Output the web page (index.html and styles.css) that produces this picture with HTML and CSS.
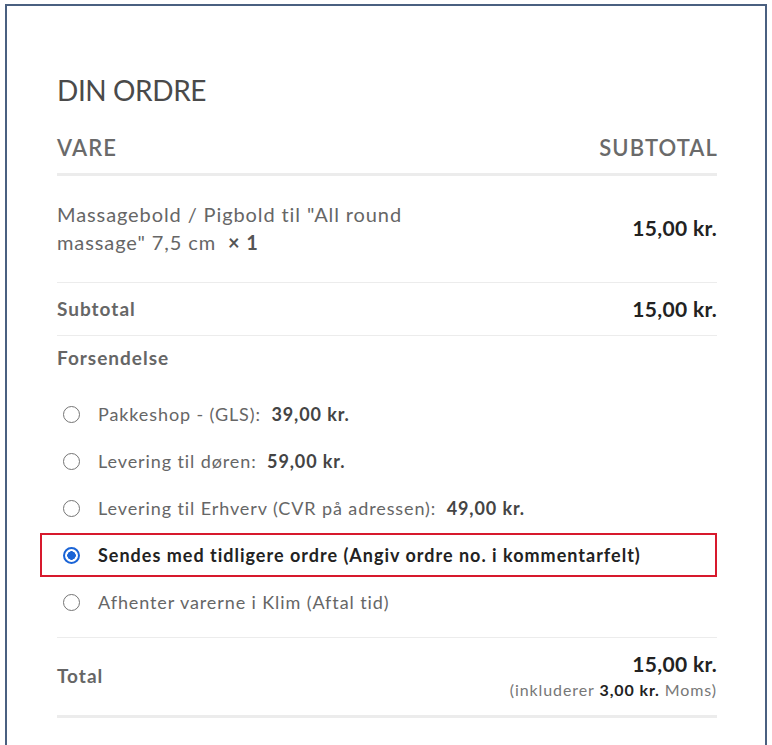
FILE: index.html
```html
<!DOCTYPE html>
<html lang="da">
<head>
<meta charset="utf-8">
<title>Din ordre</title>
<link rel="stylesheet" href="styles.css">
</head>
<body>
<div class="frame">
  <h2 class="title">DIN ORDRE</h2>
  <div class="thead">
    <span>VARE</span>
    <span>SUBTOTAL</span>
  </div>
  <div class="row product">
    <div class="pname">Massagebold / Pigbold til "All round<br>massage" 7,5&nbsp;cm<strong class="qty">×&nbsp;1</strong></div>
    <div class="amount">15,00 kr.</div>
  </div>
  <div class="row subtotal">
    <div class="label">Subtotal</div>
    <div class="amount">15,00 kr.</div>
  </div>
  <div class="shipping">
    <div class="label">Forsendelse</div>
    <ul class="methods">
      <li class="method"><input type="radio" name="ship" class="radio"><span>Pakkeshop - (GLS): <b>39,00 kr.</b></span></li>
      <li class="method"><input type="radio" name="ship" class="radio"><span>Levering til døren: <b>59,00 kr.</b></span></li>
      <li class="method"><input type="radio" name="ship" class="radio"><span>Levering til Erhverv (CVR på adressen): <b>49,00 kr.</b></span></li>
      <li class="method selected"><input type="radio" name="ship" class="radio" checked><span>Sendes med tidligere ordre (Angiv ordre no. i kommentarfelt)</span></li>
      <li class="method"><input type="radio" name="ship" class="radio"><span>Afhenter varerne i Klim (Aftal tid)</span></li>
    </ul>
  </div>
  <div class="row total">
    <div class="label">Total</div>
    <div class="total-right">
      <div class="amount">15,00 kr.</div>
      <div class="tax">(inkluderer <b>3,00 kr.</b> Moms)</div>
    </div>
  </div>
</div>
</body>
</html>
```
FILE: styles.css
```css
html, body {
  margin: 0;
  padding: 0;
  background: #fff;
}
body {
  font-family: Lato, "Open Sans", sans-serif;
  color: #666;
}
.frame {
  margin: 4px 0 0 5px;
  width: 660px;
  min-height: 760px;
  border: 2px solid #4a6080;
  border-bottom: none;
  padding: 0 48px 0 50px;
}
.title {
  margin: 66px 0 0;
  font-size: 28px;
  font-weight: 400;
  color: #4a4a4a;
  line-height: 36px;
  letter-spacing: -0.4px;
}
.thead {
  display: flex;
  justify-content: space-between;
  font-size: 22px;
  font-weight: 600;
  color: #6a6a6a;
  line-height: 28px;
  letter-spacing: 1.1px;
  margin-top: 26px;
  padding-bottom: 11px;
  border-bottom: 3px solid #ececec;
}
.thead span:last-child {
  margin-right: -1px;
}
.row {
  display: flex;
  justify-content: space-between;
  align-items: center;
  border-bottom: 1px solid #ececec;
}
.product {
  padding: 24px 0 26px;
}
.pname {
  font-size: 20px;
  line-height: 28px;
  letter-spacing: 0.9px;
  width: 380px;
  color: #666;
}
.qty {
  display: inline-block;
  margin-left: 12px;
  color: #555;
  font-weight: 700;
}
.amount {
  font-size: 21px;
  font-weight: 700;
  color: #222;
  letter-spacing: 0.3px;
  line-height: 28px;
}
.subtotal {
  padding: 12px 0 12px;
}
.label {
  font-size: 19px;
  font-weight: 700;
  color: #666;
  line-height: 28px;
  letter-spacing: 1px;
}
.shipping {
  padding-top: 8px;
}
.methods {
  list-style: none;
  margin: 20px 0 0;
  padding: 0 0 13px;
  border-bottom: 1px solid #ececec;
}
.method {
  box-sizing: border-box;
  display: flex;
  align-items: center;
  height: 44px;
  margin-left: -17px;
  padding-left: 21px;
  font-size: 18px;
  letter-spacing: 0.9px;
  color: #666;
  border: 2px solid transparent;
}
.method + .method {
  margin-top: 3px;
}
.method b {
  margin-left: 5px;
  color: #444;
  font-weight: 700;
}
.method.selected {
  border-color: #d7192d;
  font-weight: 700;
  color: #222;
  letter-spacing: 1px;
}
.radio {
  appearance: none;
  -webkit-appearance: none;
  box-sizing: border-box;
  width: 17px;
  height: 17px;
  margin: 0 18px 0 0;
  border: 1.5px solid #757575;
  border-radius: 50%;
  background: #fff;
  flex: none;
}
.radio:checked {
  border: 2px solid #1a64d6;
  background: radial-gradient(circle, #1a64d6 0 4px, #fff 4.5px);
}
.total {
  padding: 12px 0 13px;
  border-bottom: 3px solid #ececec;
}
.total-right {
  text-align: right;
}
.tax {
  font-size: 16px;
  color: #777;
  line-height: 24px;
  letter-spacing: 0.9px;
}
.tax b {
  color: #222;
}
```
